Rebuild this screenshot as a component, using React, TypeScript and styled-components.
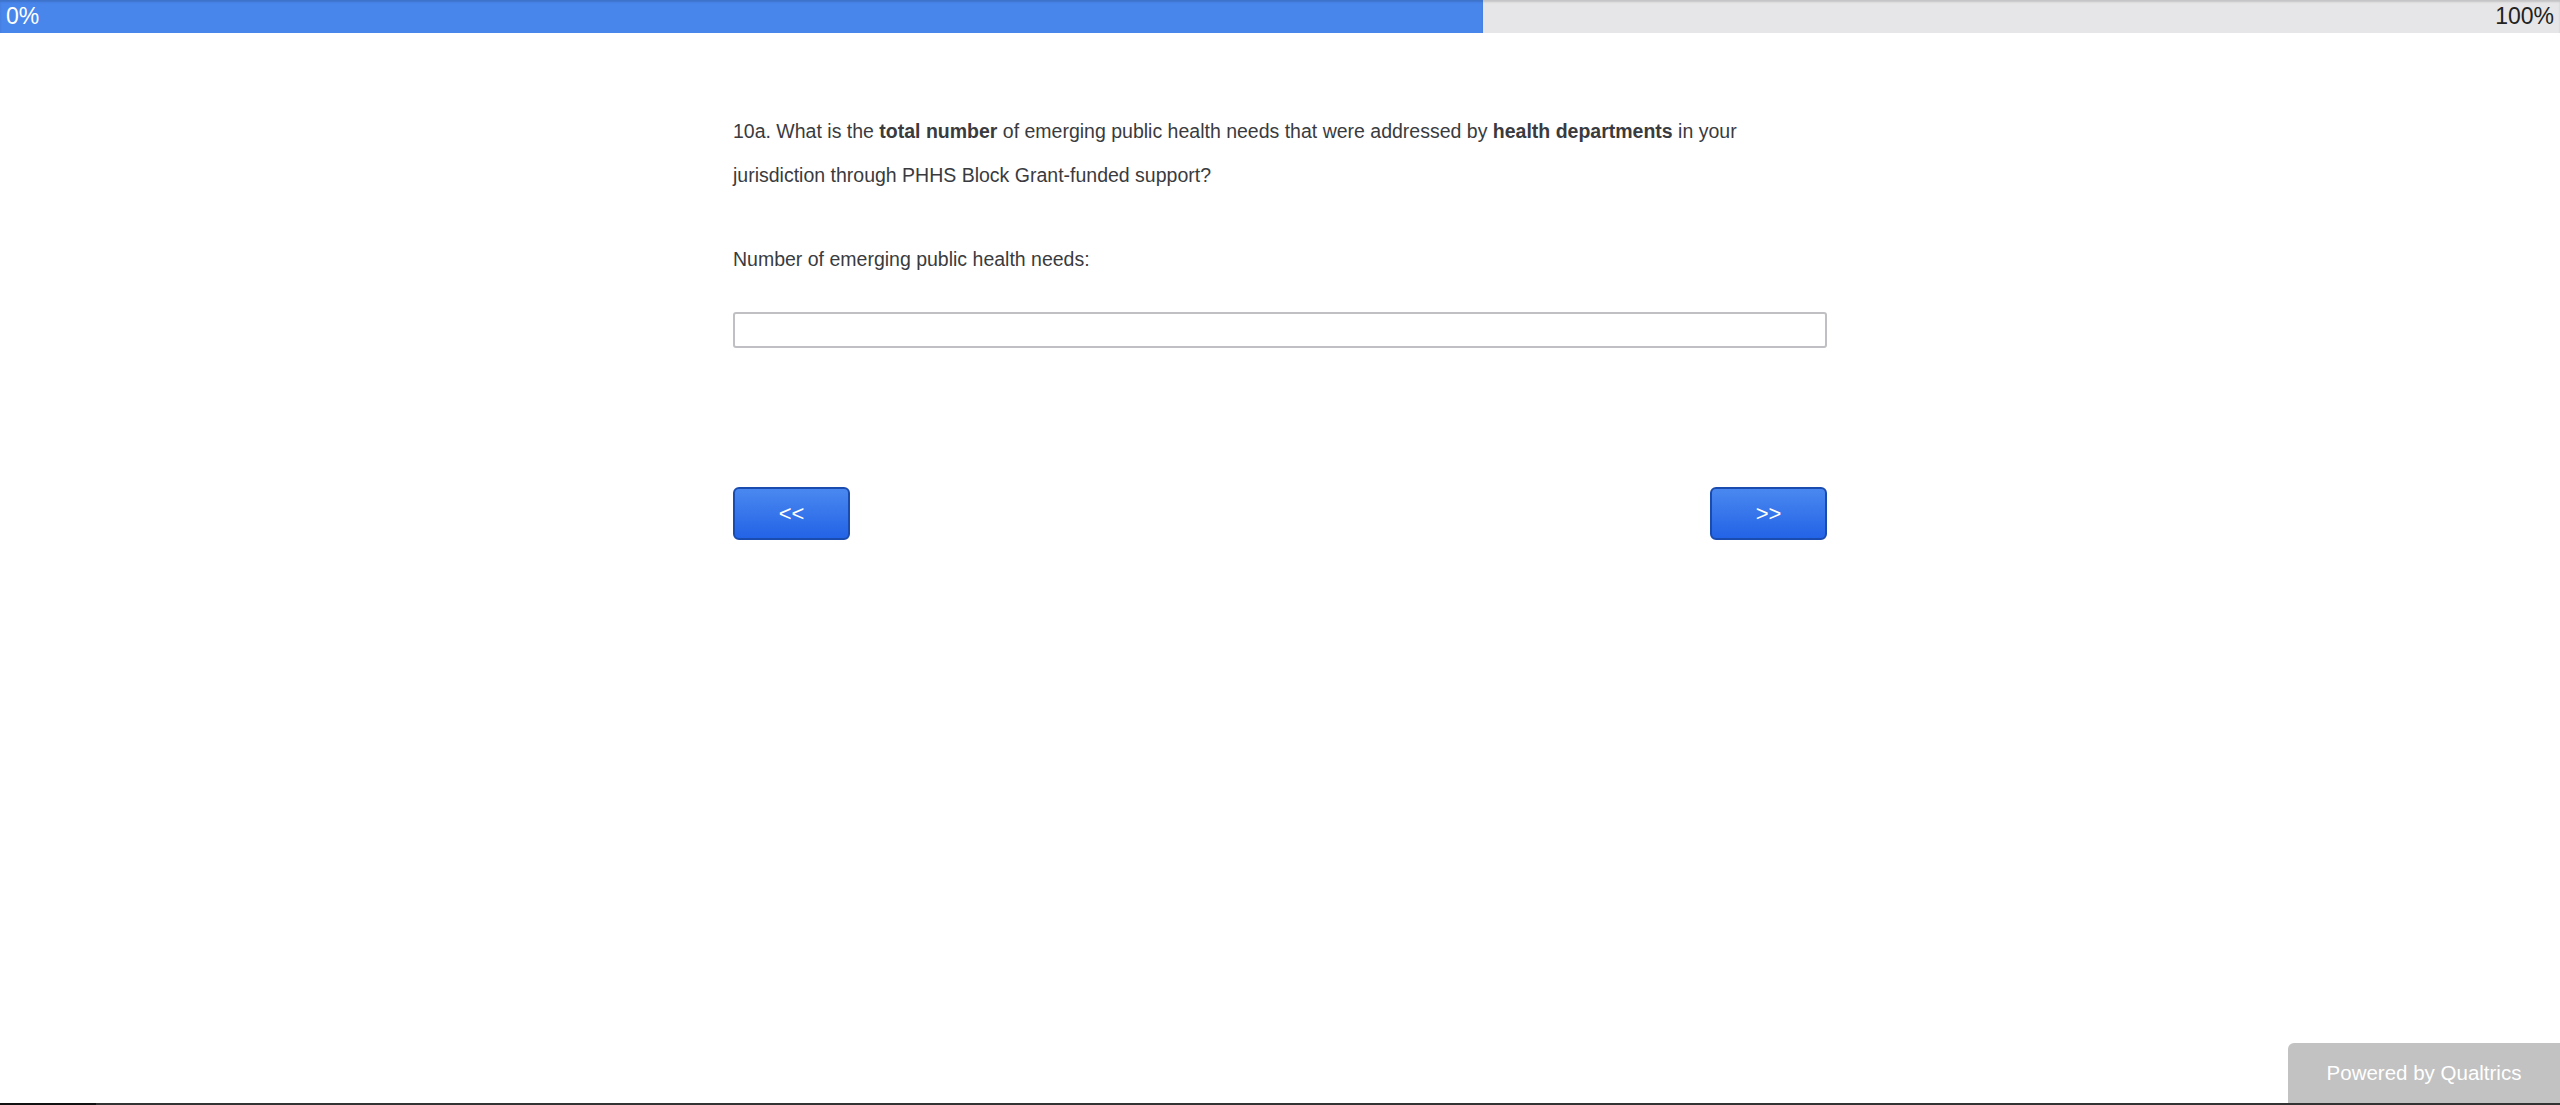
import React from "react";
import styled, { createGlobalStyle } from "styled-components";

const Global = createGlobalStyle`
  html, body { margin: 0; padding: 0; background: #fff; }
  body { font-family: "Liberation Sans", Arial, sans-serif; }
  #root { min-height: 1105px; position: relative; }
`;

const Page = styled.div`
  min-height: 1105px;
  display: flex;
  flex-direction: column;
  position: relative;
`;

const ProgressTrack = styled.div`
  position: relative;
  height: 33px;
  background: #e6e6e8;
  box-shadow: inset 0 2px 2px rgba(0, 0, 0, 0.15);
  display: flex;
`;

const ProgressFill = styled.div`
  height: 100%;
  background: #4886ec;
  box-shadow: inset 0 2px 2px rgba(0, 0, 0, 0.15);
`;

const ProgressLabel = styled.span<{ $side: "left" | "right" }>`
  position: absolute;
  top: 0;
  ${(p) => (p.$side === "left" ? "left: 6px;" : "right: 6px;")}
  line-height: 33px;
  font-size: 23px;
  color: ${(p) => (p.$side === "left" ? "#fff" : "#222")};
`;

const Survey = styled.main`
  width: 1094px;
  margin: 0 auto;
  padding-top: 76px;
  display: flex;
  flex-direction: column;
`;

const QuestionText = styled.p`
  margin: 0;
  font-size: 19.5px;
  line-height: 44px;
  color: #3a3b3e;
  b { font-weight: bold; }
`;

const Label = styled.label`
  margin-top: 40px;
  font-size: 19.5px;
  line-height: 44px;
  color: #3a3b3e;
`;

const TextInput = styled.input`
  margin-top: 31px;
  box-sizing: border-box;
  width: 100%;
  height: 36px;
  border: 2px solid #c0c0c4;
  border-radius: 3px;
  background: #fff;
  outline: none;
  font-size: 18px;
  padding: 0 8px;
`;

const Nav = styled.div`
  margin-top: 139px;
  display: flex;
  justify-content: space-between;
`;

const NavButton = styled.button`
  box-sizing: border-box;
  width: 117px;
  height: 53px;
  border: 2px solid #1a4cb0;
  border-radius: 6px;
  background: linear-gradient(to bottom, #4a88f0, #2363e6);
  color: #fff;
  font-family: "Liberation Sans", Arial, sans-serif;
  font-size: 22px;
  cursor: pointer;
`;

const Powered = styled.div`
  position: absolute;
  right: 0;
  bottom: 2px;
  width: 272px;
  height: 60px;
  background: #c2c2c2;
  border-top-left-radius: 6px;
  color: #fff;
  font-size: 20.5px;
  display: flex;
  align-items: center;
  justify-content: center;
`;

const BottomRule = styled.div`
  position: absolute;
  left: 0;
  right: 0;
  bottom: 0;
  height: 2px;
  background: linear-gradient(to right, #111 0, #111 96px, #333 96px);
`;

export default function App() {
  return (
    <Page>
      <Global />
      <ProgressTrack>
        <ProgressFill style={{ width: "1483px" }} />
        <ProgressLabel $side="left">0%</ProgressLabel>
        <ProgressLabel $side="right">100%</ProgressLabel>
      </ProgressTrack>
      <Survey>
        <QuestionText>
          10a. What is the <b>total number</b> of emerging public health needs that were addressed by{" "}
          <b>health departments</b> in your jurisdiction through PHHS Block Grant-funded support?
        </QuestionText>
        <Label htmlFor="q10a">Number of emerging public health needs:</Label>
        <TextInput id="q10a" type="text" />
        <Nav>
          <NavButton>&lt;&lt;</NavButton>
          <NavButton>&gt;&gt;</NavButton>
        </Nav>
      </Survey>
      <Powered>Powered by Qualtrics</Powered>
      <BottomRule />
    </Page>
  );
}
